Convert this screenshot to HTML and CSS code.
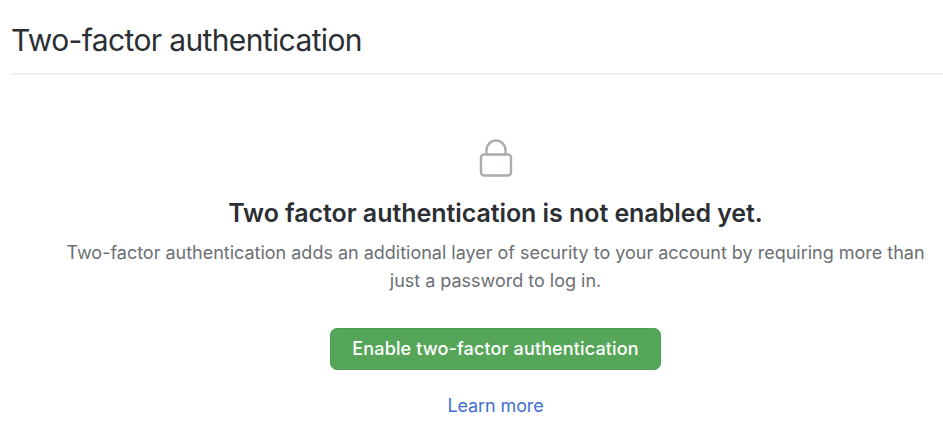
FILE: index.html
```html
<!DOCTYPE html>
<html lang="en">
<head>
<meta charset="utf-8">
<title>Two-factor authentication</title>
<link rel="stylesheet" href="styles.css">
</head>
<body>
<main class="settings">
  <h1 class="page-title">Two-factor authentication</h1>
  <section class="blankslate">
    <svg class="lock" viewBox="0 0 34 38" aria-hidden="true">
      <rect x="2" y="15.5" width="30" height="21" rx="3"/>
      <path d="M7.5 15.5V11a9.5 9.5 0 0 1 19 0v4.5"/>
    </svg>
    <h2 class="heading">Two factor authentication is not enabled yet.</h2>
    <p class="description">Two-factor authentication adds an additional layer of security to your account by requiring more than<br>just a password to log in.</p>
    <button class="enable" type="button">Enable two-factor authentication</button>
    <a class="learn" href="#">Learn more</a>
  </section>
</main>
</body>
</html>
```
FILE: styles.css
```css
* { box-sizing: border-box; }
body {
  margin: 0;
  background: #fff;
  color: #2b2f33;
  font-family: Inter, "Liberation Sans", sans-serif;
}
.settings { padding-left: 11px; }
.page-title {
  margin: 0;
  height: 75px;
  padding-top: 20px;
  border-bottom: 2px solid #eeeff0;
  font-size: 30px;
  line-height: 40px;
  font-weight: 400;
  letter-spacing: -0.63px;
}
.blankslate {
  display: flex;
  flex-direction: column;
  align-items: center;
  padding: 64px 0 0 37px;
  white-space: nowrap;
}
.lock {
  width: 34px;
  height: 38px;
  fill: none;
  stroke: #a9adaf;
  stroke-width: 2.4;
}
.heading {
  margin: 19px 0 0;
  font-size: 25px;
  line-height: 34px;
  font-weight: 600;
  letter-spacing: -0.06px;
}
.description {
  margin: 9px 0 0;
  color: #6b6f73;
  font-size: 18px;
  line-height: 28px;
  letter-spacing: -0.01px;
  text-align: center;
}
.enable {
  width: 331px;
  height: 42px;
  margin-top: 33px;
  padding: 0;
  border: 1px solid #4e9c52;
  border-radius: 7px;
  background: #56a65a;
  color: #fff;
  font: 500 18px/40px Inter, "Liberation Sans", sans-serif;
  letter-spacing: 0.13px;
}
.learn {
  margin-top: 22px;
  color: #4270d1;
  font-size: 18px;
  line-height: 28px;
  letter-spacing: -0.1px;
  text-decoration: none;
}
```
